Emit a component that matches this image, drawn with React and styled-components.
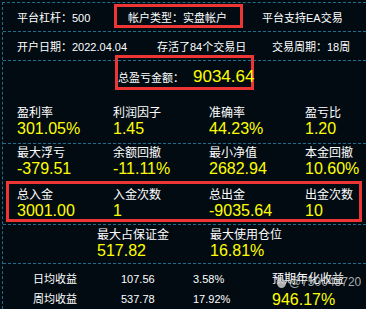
import React from 'react';
import styled, { createGlobalStyle } from 'styled-components';

// account summary panel: dashed grid rows, red annotation boxes on top
const GlobalStyle = createGlobalStyle`
  * { box-sizing: border-box; }
  html, body {
    margin: 0;
    padding: 0;
    background: #020b12;
    overflow: hidden;
  }
  body {
    font-family: "Liberation Sans", "Noto Sans CJK SC", sans-serif;
    color: #ffffff;
  }
`;

const line = '1px dashed #1d6f8c';
const red = '#ee3535';

const Panel = styled.div`
  margin: 2px 0 0 2px;
  border-top: ${line};
  border-left: ${line};
`;

const InfoRow = styled.div`
  display: grid;
  grid-template-columns: ${p => p.cols};
  align-items: center;
  height: 29px;
  padding-left: 14px;
  border-bottom: ${line};
  font-size: 11px;
  white-space: nowrap;
`;

const InfoCell = styled.div`
  padding-left: ${p => p.pad || 0}px;
`;

const Marked = styled.div`
  position: relative;
  height: 100%;
  display: flex;
  align-items: center;
  padding-left: 14px;
  &::after {
    content: '';
    position: absolute;
    left: 0;
    right: 0;
    top: 1px;
    bottom: 3px;
    border: 3px solid ${red};
  }
`;

const TotalRow = styled.div`
  display: flex;
  justify-content: center;
  height: 39px;
`;

const TotalBox = styled.div`
  display: flex;
  align-items: baseline;
  width: 139px;
  height: 35px;
  margin-top: -6px;
  padding: 9px 0 0 0;
  border: 3px solid ${red};
  white-space: nowrap;
`;

const TotalLabel = styled.span`
  font-size: 11px;
  margin-right: 9px;
`;

const TotalValue = styled.span`
  font-size: 17px;
  line-height: 20px;
  color: #ffff00;
`;

const StatRow = styled.div`
  position: relative;
  display: grid;
  grid-template-columns: ${p => p.cols || 'repeat(3, 96px) 1fr'};
  height: ${p => p.h}px;
  padding-top: ${p => p.top}px;
  padding-left: ${p => p.left || 14}px;
  border-bottom: ${p => (p.line ? line : 'none')};
`;

const RowMark = styled.div`
  position: absolute;
  left: 3px;
  width: 356px;
  top: 0;
  bottom: 2px;
  border: 3px solid ${red};
  pointer-events: none;
`;

const Stat = styled.div`
  display: flex;
  flex-direction: column;
  white-space: nowrap;
`;

const StatLabel = styled.div`
  font-size: 12px;
  line-height: 15px;
`;

const StatValue = styled.div`
  font-size: 16px;
  line-height: 16px;
  color: #ffff00;
`;

const Bottom = styled.div`
  position: relative;
  display: grid;
  grid-template-columns: 88px 72px 79px 1fr;
  grid-template-rows: 20px 20px;
  padding: 5px 0 0 30px;
  font-size: 11px;
  white-space: nowrap;
`;

const Cell = styled.div`
  line-height: 20px;
`;

const Forecast = styled.div`
  grid-column: 4;
  grid-row: 1 / span 2;
  display: flex;
  flex-direction: column;
`;

const ForecastLabel = styled.div`
  font-size: 12px;
  line-height: 21px;
`;

const ForecastValue = styled.div`
  font-size: 16px;
  line-height: 20px;
  color: #ffff00;
`;

const Watermark = styled.div`
  position: absolute;
  left: 272px;
  top: 11px;
  display: flex;
  align-items: center;
  gap: 2px;
  font-size: 12px;
  color: rgba(215, 215, 215, 0.8);
  pointer-events: none;
`;

const topStats = [
  { label: '盈利率', value: '301.05%' },
  { label: '利润因子', value: '1.45' },
  { label: '准确率', value: '44.23%' },
  { label: '盈亏比', value: '1.20' },
];

const midStats = [
  { label: '最大浮亏', value: '-379.51' },
  { label: '余额回撤', value: '-11.11%' },
  { label: '最小净值', value: '2682.94' },
  { label: '本金回撤', value: '10.60%' },
];

const cashStats = [
  { label: '总入金', value: '3001.00' },
  { label: '入金次数', value: '1' },
  { label: '总出金', value: '-9035.64' },
  { label: '出金次数', value: '10' },
];

const renderStats = list =>
  list.map(s => (
    <Stat key={s.label}>
      <StatLabel>{s.label}</StatLabel>
      <StatValue>{s.value}</StatValue>
    </Stat>
  ));

export default function App() {
  return (
    <>
      <GlobalStyle />
      <Panel>
        <InfoRow cols="97px 129px 1fr">
          <InfoCell>平台杠杆：500</InfoCell>
          <Marked>帐户类型：实盘帐户</Marked>
          <InfoCell pad={19}>平台支持EA交易</InfoCell>
        </InfoRow>
        <InfoRow cols="140px 115px 1fr">
          <InfoCell>开户日期：2022.04.04</InfoCell>
          <InfoCell>存活了84个交易日</InfoCell>
          <InfoCell>交易周期：18周</InfoCell>
        </InfoRow>
        <TotalRow>
          <TotalBox>
            <TotalLabel>总盈亏金额：</TotalLabel>
            <TotalValue>9034.64</TotalValue>
          </TotalBox>
        </TotalRow>
        <StatRow h={44} top={6} line>
          {renderStats(topStats)}
        </StatRow>
        <StatRow h={37} top={2}>
          {renderStats(midStats)}
        </StatRow>
        <StatRow h={44} top={7} line>
          {renderStats(cashStats)}
          <RowMark />
        </StatRow>
        <StatRow h={39} top={3} left={94} cols="113px 1fr" line>
          <Stat>
            <StatLabel>最大占保证金</StatLabel>
            <StatValue>517.82</StatValue>
          </Stat>
          <Stat>
            <StatLabel>最大使用仓位</StatLabel>
            <StatValue>16.81%</StatValue>
          </Stat>
        </StatRow>
        <Bottom>
          <Cell>日均收益</Cell>
          <Cell>107.56</Cell>
          <Cell>3.58%</Cell>
          <Forecast>
            <ForecastLabel>预期年化收益</ForecastLabel>
            <ForecastValue>946.17%</ForecastValue>
          </Forecast>
          <Cell>周均收益</Cell>
          <Cell>537.78</Cell>
          <Cell>17.92%</Cell>
          <Watermark>
            <svg width="12" height="14" viewBox="0 0 12 14">
              <path
                d="M6 1 C3 3 1 6 2 9 C3 12 5 13 6 13 C9 13 11 11 11 8 C11 6 9 5 8 4 C8 6 7 7 6 7 C7 5 7 3 6 1 Z"
                fill="rgba(215,215,215,0.8)"
              />
            </svg>
            <span>@750043720</span>
          </Watermark>
        </Bottom>
      </Panel>
    </>
  );
}
